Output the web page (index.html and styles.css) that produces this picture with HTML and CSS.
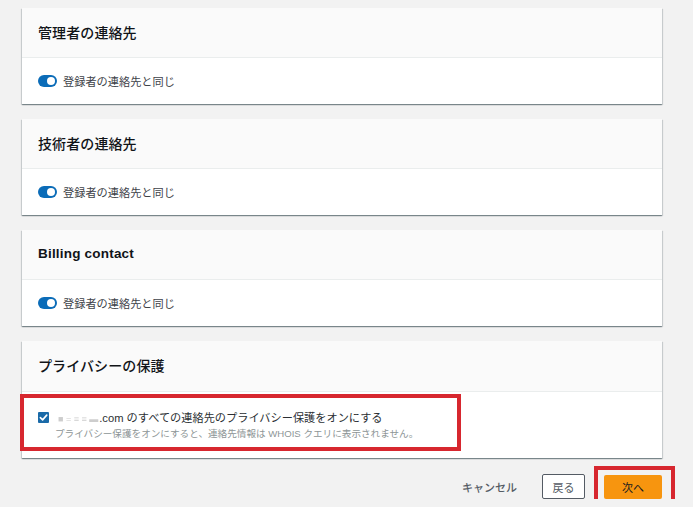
FILE: index.html
```html
<!DOCTYPE html>
<html lang="ja">
<head>
<meta charset="utf-8">
<link rel="stylesheet" href="styles.css">
</head>
<body>
<div class="page">
  <section class="card">
    <div class="card-header"><h2>管理者の連絡先</h2></div>
    <div class="card-body">
      <span class="toggle"><span class="knob"></span></span>
      <span class="label">登録者の連絡先と同じ</span>
    </div>
  </section>
  <section class="card">
    <div class="card-header"><h2>技術者の連絡先</h2></div>
    <div class="card-body">
      <span class="toggle"><span class="knob"></span></span>
      <span class="label">登録者の連絡先と同じ</span>
    </div>
  </section>
  <section class="card">
    <div class="card-header"><h2 class="latin">Billing contact</h2></div>
    <div class="card-body">
      <span class="toggle"><span class="knob"></span></span>
      <span class="label">登録者の連絡先と同じ</span>
    </div>
  </section>
  <section class="card">
    <div class="card-header tall"><h2>プライバシーの保護</h2></div>
    <div class="card-body privacy">
      <span class="checkbox">
        <svg width="9" height="9" viewBox="0 0 10 10"><path d="M1.5 5.2 L4 7.6 L8.6 2.4" fill="none" stroke="#fff" stroke-width="1.8" stroke-linecap="round" stroke-linejoin="round"/></svg>
      </span>
      <div class="privacy-text">
        <div class="line1"><span class="masked">■ = ≡ ≡ ▬</span>.com のすべての連絡先のプライバシー保護をオンにする</div>
        <div class="line2">プライバシー保護をオンにすると、連絡先情報は WHOIS クエリに表示されません。</div>
      </div>
      <span class="highlight privacy-highlight"></span>
    </div>
  </section>
  <div class="actions">
    <button class="btn link">キャンセル</button>
    <button class="btn normal">戻る</button>
    <span class="next-wrap">
      <button class="btn primary">次へ</button>
      <span class="highlight next-highlight"></span>
    </span>
  </div>
</div>
</body>
</html>
```

FILE: styles.css
```css
html, body {
  margin: 0;
  padding: 0;
  background: #f2f2f2;
  font-family: "Liberation Sans", "Noto Sans CJK JP", sans-serif;
  color: #16191f;
  overflow: hidden;
}

.page {
  width: 640px;
  padding: 8px 0 0 22px;
}

.card {
  background: #fff;
  margin-bottom: 15px;
  box-shadow: 0 1px 1px 0 rgba(0, 28, 36, 0.35), 1px 1px 1px 0 rgba(0, 28, 36, 0.12), -1px 1px 1px 0 rgba(0, 28, 36, 0.12);
}

.card-header {
  height: 50px;
  box-sizing: border-box;
  padding: 0 16px 2px;
  display: flex;
  align-items: center;
  background: #fafafa;
  border-bottom: 1px solid #eaeded;
}

.card-header.tall {
  height: 51px;
}

.card-header h2 {
  margin: 0;
  font-size: 14px;
  font-weight: 500;
  color: #111418;
  letter-spacing: 0.1px;
}

.card-header h2.latin {
  font-weight: 700;
  font-size: 13.5px;
  letter-spacing: 0.2px;
}

.card-body {
  height: 46px;
  box-sizing: border-box;
  padding: 0 16px;
  display: flex;
  align-items: center;
  position: relative;
}

.toggle {
  width: 19px;
  height: 12px;
  border-radius: 6px;
  background: #0b6cb8;
  display: flex;
  align-items: center;
  justify-content: flex-end;
  padding: 0 2px;
  box-sizing: border-box;
  margin-right: 6px;
}

.knob {
  width: 8px;
  height: 8px;
  border-radius: 50%;
  background: #fff;
}

.label {
  font-size: 11.2px;
  color: #3d4248;
}

.card-body.privacy {
  height: 66px;
  align-items: flex-start;
  padding-top: 19px;
}

.checkbox {
  width: 11px;
  height: 11px;
  background: #1a6aa8;
  border-radius: 1px;
  display: flex;
  align-items: center;
  justify-content: center;
  margin-top: 1px;
  margin-right: 9px;
}

.privacy-text {
  display: flex;
  flex-direction: column;
}

.line1 {
  font-size: 11.2px;
  color: #2b2f33;
  line-height: 14px;
}

.masked {
  color: #cdcdcd;
  filter: blur(0.6px);
  font-size: 9px;
  margin-right: 1px;
}

.line2 {
  font-size: 9.6px;
  color: #8d9596;
  line-height: 14px;
  margin-top: 1px;
  margin-left: -3px;
}

.highlight {
  position: absolute;
  border: 4px solid #d7272f;
  box-sizing: border-box;
  pointer-events: none;
}

.privacy-highlight {
  left: -2px;
  top: 2px;
  width: 441px;
  height: 57px;
}

.actions {
  display: flex;
  justify-content: flex-end;
  align-items: center;
  margin-top: 16px;
}

.btn {
  font-family: "Liberation Sans", "Noto Sans CJK JP", sans-serif;
  font-size: 11px;
  border-radius: 2px;
  cursor: pointer;
  box-sizing: border-box;
  height: 25px;
  padding: 0;
}

.btn.link {
  background: none;
  border: none;
  color: #545b64;
  font-weight: 500;
  margin-right: 25px;
}

.btn.normal {
  background: #fff;
  border: 1px solid #545b64;
  color: #545b64;
  width: 43px;
  margin-right: 19px;
}

.next-wrap {
  position: relative;
  display: flex;
}

.btn.primary {
  background: #f7950f;
  border: none;
  color: #16191f;
  width: 58px;
  height: 24px;
}

.next-highlight {
  left: -10px;
  top: -9px;
  width: 81px;
  height: 46px;
}
```
